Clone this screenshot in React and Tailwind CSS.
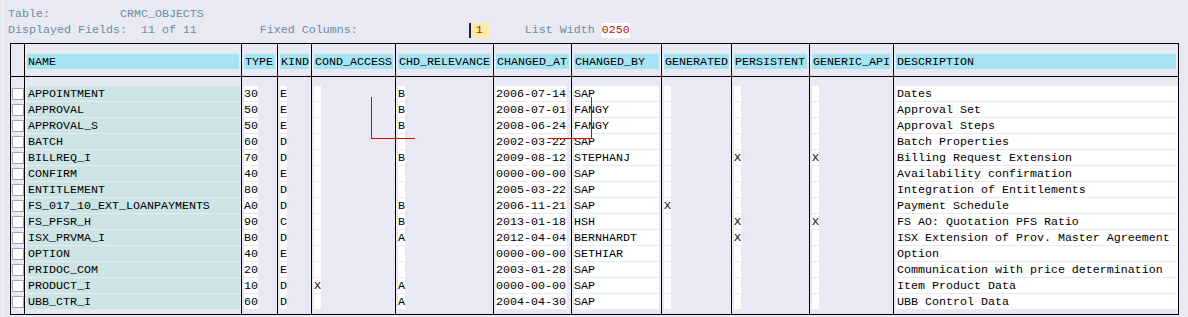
import React from "react";

const cols = [
  { key: "name", label: "NAME", w: "w-[217px]", cell: "w-[213px] bg-[#cde4e4] pl-[1px]" },
  { key: "type", label: "TYPE", w: "w-[36px]", cell: "w-[14px] bg-white" },
  { key: "kind", label: "KIND", w: "w-[34px]", cell: "w-[7px] bg-white" },
  { key: "cond", label: "COND_ACCESS", w: "w-[84px]", cell: "w-[7px] bg-white" },
  { key: "chd", label: "CHD_RELEVANCE", w: "w-[98px]", cell: "w-[7px] bg-white" },
  { key: "at", label: "CHANGED_AT", w: "w-[78px]", cell: "w-[71px] bg-white" },
  { key: "by", label: "CHANGED_BY", w: "w-[90px]", cell: "w-[85px] bg-white" },
  { key: "gen", label: "GENERATED", w: "w-[70px]", cell: "w-[7px] bg-white" },
  { key: "pers", label: "PERSISTENT", w: "w-[78px]", cell: "w-[7px] bg-white" },
  { key: "api", label: "GENERIC_API", w: "w-[84px]", cell: "w-[7px] bg-white" },
  { key: "desc", label: "DESCRIPTION", w: "w-[285px]", cell: "w-[282px] bg-white pl-[1px]" },
];

const rows = [
  ["APPOINTMENT", "30", "E", "", "B", "2006-07-14", "SAP", "", "", "", "Dates"],
  ["APPROVAL", "50", "E", "", "B", "2008-07-01", "FANGY", "", "", "", "Approval Set"],
  ["APPROVAL_S", "50", "E", "", "B", "2008-06-24", "FANGY", "", "", "", "Approval Steps"],
  ["BATCH", "60", "D", "", "", "2002-03-22", "SAP", "", "", "", "Batch Properties"],
  ["BILLREQ_I", "70", "D", "", "B", "2009-08-12", "STEPHANJ", "", "X", "X", "Billing Request Extension"],
  ["CONFIRM", "40", "E", "", "", "0000-00-00", "SAP", "", "", "", "Availability confirmation"],
  ["ENTITLEMENT", "80", "D", "", "", "2005-03-22", "SAP", "", "", "", "Integration of Entitlements"],
  ["FS_017_10_EXT_LOANPAYMENTS", "A0", "D", "", "B", "2006-11-21", "SAP", "X", "", "", "Payment Schedule"],
  ["FS_PFSR_H", "90", "C", "", "B", "2013-01-18", "HSH", "", "X", "X", "FS AO: Quotation PFS Ratio"],
  ["ISX_PRVMA_I", "B0", "D", "", "A", "2012-04-04", "BERNHARDT", "", "X", "", "ISX Extension of Prov. Master Agreement"],
  ["OPTION", "40", "E", "", "", "0000-00-00", "SETHIAR", "", "", "", "Option"],
  ["PRIDOC_COM", "20", "E", "", "", "2003-01-28", "SAP", "", "", "", "Communication with price determination"],
  ["PRODUCT_I", "10", "D", "X", "A", "0000-00-00", "SAP", "", "", "", "Item Product Data"],
  ["UBB_CTR_I", "60", "D", "", "A", "2004-04-30", "SAP", "", "", "", "UBB Control Data"],
];

export default function App() {
  return (
    <div className="relative w-[1188px] h-[317px] overflow-hidden bg-[#e9e9f4] font-['Liberation_Mono','Courier_New',monospace] text-[11.67px] text-black">
      <div className="absolute left-[2px] top-0 h-full w-px bg-[#f6f6fb]" />
      {/* Info header */}
      <div className="pt-[6px] pl-[8px] text-[#6a8ca6]">
        <div className="h-[16px] leading-[16px] whitespace-pre">{"Table:          CRMC_OBJECTS"}</div>
        <div className="h-[16px] leading-[16px] flex items-center">
          <span className="whitespace-pre">{"Displayed Fields:  11 of 11         Fixed Columns:"}</span>
          <span className="ml-[111px] flex h-[15px]">
            <span className="w-[2px] h-[15px] bg-[#1b1b6b]" />
            <span className="w-[19px] h-[15px] bg-[#fbeca3] text-[#c01010] leading-[15px] pl-[5px]">1</span>
          </span>
          <span className="ml-[35px] whitespace-pre">{"List Width "}</span>
          <span className="bg-white text-[#c01010] h-[15px] leading-[15px] w-[28px]">0250</span>
        </div>
      </div>

      {/* Table */}
      <div className="mt-[5px] ml-[10px] w-[1169px] border border-black flex">
        {/* checkbox column */}
        <div className="w-[13px] shrink-0 flex flex-col">
          <div className="h-[33px] border-b border-black" />
          <div className="pt-[9px] pb-[5px] flex flex-col gap-px">
            {rows.map((r, i) => (
              <div key={i} className="h-[15px] pl-[1px] pt-[2px]">
                <div className="w-[12px] h-[12px] bg-white border border-[#a4a4ae]" />
              </div>
            ))}
          </div>
        </div>
        {cols.map((c, ci) => (
          <div key={c.key} className={`${c.w} shrink-0 border-l border-black flex flex-col`}>
            <div className="h-[33px] border-b border-black pt-[10px] pl-[2px] pr-[2px]">
              <div className="h-[15px] leading-[16px] bg-[#a6e4f3] pl-[1px] whitespace-nowrap overflow-hidden">
                {c.label}
              </div>
            </div>
            <div className="pt-[9px] pb-[5px] pl-[2px] flex flex-col gap-px">
              {rows.map((r, i) => (
                <div key={i} className={`${c.cell} h-[15px] leading-[16px] whitespace-pre overflow-visible`}>
                  {r[ci]}
                </div>
              ))}
            </div>
          </div>
        ))}
      </div>

      {/* red crop marks */}
      <div className="absolute left-[371px] top-[97px] w-px h-[42px] bg-[#e00000]" />
      <div className="absolute left-[371px] top-[138px] w-[44px] h-px bg-[#e00000]" />
      <div className="absolute left-[591px] top-[97px] w-px h-[42px] bg-[#e00000]" />
      <div className="absolute left-[548px] top-[138px] w-[44px] h-px bg-[#e00000]" />
    </div>
  );
}
